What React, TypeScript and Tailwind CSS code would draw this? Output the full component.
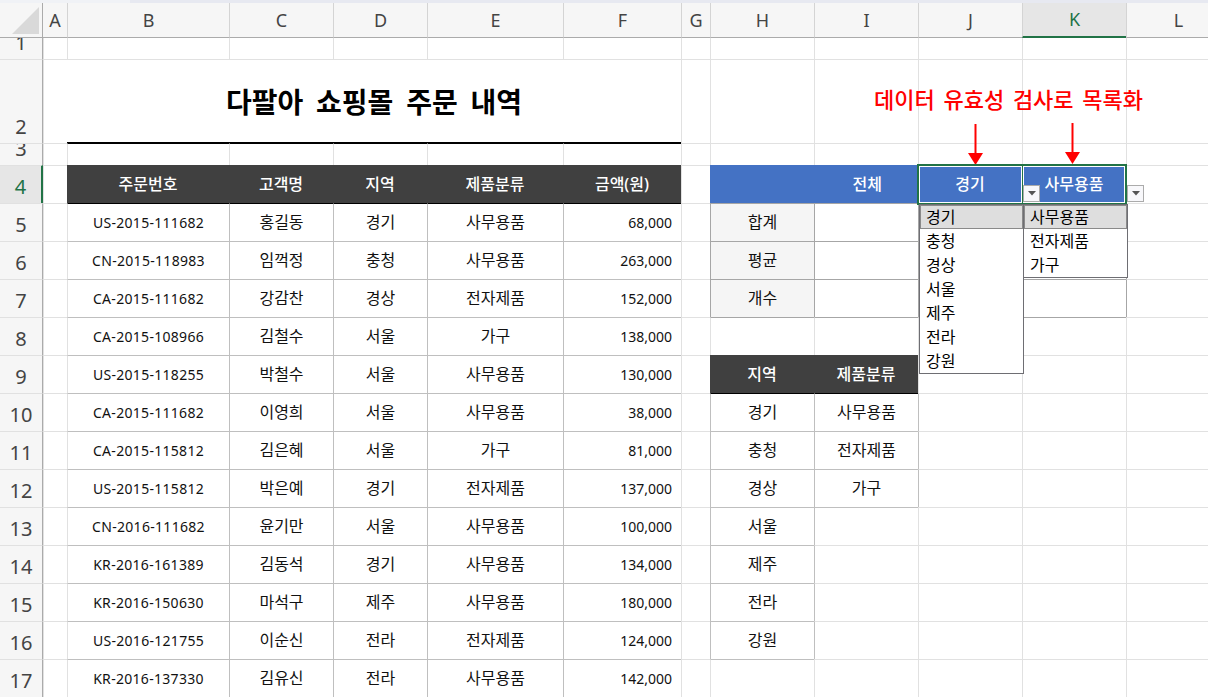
import { Fragment } from "react";
import type { ReactNode } from "react";

const columns = ["A", "B", "C", "D", "E", "F", "G", "H", "I", "J", "K", "L"];

const orders = [
  ["US-2015-111682", "홍길동", "경기", "사무용품", "68,000"],
  ["CN-2015-118983", "임꺽정", "충청", "사무용품", "263,000"],
  ["CA-2015-111682", "강감찬", "경상", "전자제품", "152,000"],
  ["CA-2015-108966", "김철수", "서울", "가구", "138,000"],
  ["US-2015-118255", "박철수", "서울", "사무용품", "130,000"],
  ["CA-2015-111682", "이영희", "서울", "사무용품", "38,000"],
  ["CA-2015-115812", "김은혜", "서울", "가구", "81,000"],
  ["US-2015-115812", "박은예", "경기", "전자제품", "137,000"],
  ["CN-2016-111682", "윤기만", "서울", "사무용품", "100,000"],
  ["KR-2016-161389", "김동석", "경기", "사무용품", "134,000"],
  ["KR-2016-150630", "마석구", "제주", "사무용품", "180,000"],
  ["US-2016-121755", "이순신", "전라", "전자제품", "124,000"],
  ["KR-2016-137330", "김유신", "전라", "사무용품", "142,000"],
];

const regions = ["경기", "충청", "경상", "서울", "제주", "전라", "강원"];
const categories = ["사무용품", "전자제품", "가구"];

// every cell draws its left and top line, as the sheet's lines sit on the first pixel of a cell
const plain = "border-l border-t border-[#e1e1e1]";
const topRow = "border-l border-[#e1e1e1]";
const data = "border-l border-t border-[#bfbfbf] pb-px";
const dataBelowHead = "border-l border-t border-l-[#bfbfbf] border-t-black pb-px";
const dataEdge = "border-l border-t border-l-[#e1e1e1] border-t-[#bfbfbf] pb-px";
const dataEdgeBelowHead = "border-l border-t border-l-[#e1e1e1] border-t-black pb-px";
const stat = "border-l border-t border-[#a6a6a6] pb-px";
const underStat = "border-l border-t border-l-[#e1e1e1] border-t-[#a6a6a6]";
const rightOfStat = "border-l border-t border-l-[#a6a6a6] border-t-[#e1e1e1]";
const rightOfData = "border-l border-t border-l-[#bfbfbf] border-t-[#e1e1e1]";
const dark = "bg-[#404040] font-medium text-white";
const blue = "bg-[#4472c4] font-medium text-white";

function Cell({ className = plain, children }: { className?: string; children?: ReactNode }) {
  return (
    <div className={`flex min-w-0 items-center justify-center overflow-hidden whitespace-nowrap ${className}`}>
      {children}
    </div>
  );
}

function RowHead({ n, active }: { n: number; active?: boolean }) {
  return (
    <div
      className={`flex items-end justify-center overflow-hidden pb-[5px] text-[20px] leading-[22px] ${
        n === 1 ? "" : "border-t border-t-[#e1e1e1]"
      } ${
        active
          ? "border-r-2 border-r-[#217346] bg-[#e6e6e6] text-[#217346]"
          : "border-r border-r-[#ababab] bg-[#f6f6f6] text-[#444444]"
      }`}
    >
      {n}
    </div>
  );
}

function DropList({ items, className }: { items: string[]; className: string }) {
  return (
    <div className={`absolute w-[105px] border border-[#6e6e73] bg-white text-black ${className}`}>
      {items.map((item, i) => (
        <div
          key={item}
          className={`flex h-[24px] items-center ${
            i === 0 ? "border border-[#8a8a8a] bg-[#dedede] pl-[5px]" : "pl-[6px]"
          }`}
        >
          {item}
        </div>
      ))}
    </div>
  );
}

function DropButton({ className }: { className: string }) {
  return (
    <div className={`absolute flex h-[17px] w-[17px] items-center justify-center border border-[#ababab] bg-[#f8f8fb] ${className}`}>
      <svg width="8" height="5" viewBox="0 0 8 5">
        <path d="M0 0h8L4 4.5z" fill="#555555" />
      </svg>
    </div>
  );
}

function DownArrow({ className }: { className: string }) {
  return (
    <svg className={`absolute ${className}`} width="15" height="41" viewBox="0 0 15 41">
      <path d="M6.5 0h2v30h-2z" fill="#ff0000" />
      <path d="M0 29h15L7.5 41z" fill="#ff0000" />
    </svg>
  );
}

function SideCells({ row }: { row: number }) {
  if (row >= 5 && row <= 7) {
    const label = row === 5 ? "합계" : row === 6 ? "평균" : "개수";
    return (
      <>
        <Cell className={`${stat} bg-[#f5f5f5]`}>{label}</Cell>
        <Cell className={stat} />
        <Cell className={stat} />
        <Cell className={stat} />
        <Cell className={rightOfStat} />
      </>
    );
  }
  if (row === 8) {
    return (
      <>
        <Cell className={underStat} />
        <Cell className={underStat} />
        <Cell className={underStat} />
        <Cell className={underStat} />
        <Cell />
      </>
    );
  }
  if (row === 9) {
    return (
      <>
        <Cell className={dark}>지역</Cell>
        <Cell className={dark}>제품분류</Cell>
        <Cell />
        <Cell />
        <Cell />
      </>
    );
  }
  const below = row === 10 ? dataBelowHead : data;
  const region = regions[row - 10];
  const category = categories[row - 10];
  const columnI = category ? below : row === 13 ? data : region ? rightOfData : plain;
  return (
    <>
      <Cell className={region ? below : dataEdge}>{region}</Cell>
      <Cell className={columnI}>{category}</Cell>
      <Cell className={category ? rightOfData : plain} />
      <Cell />
      <Cell />
    </>
  );
}

export default function App() {
  return (
    <div className="relative h-[697px] w-[1208px] overflow-hidden bg-white font-['Noto_Sans','Noto_Sans_CJK_KR',sans-serif] text-[16px] text-[#111111]">
      <div className="flex h-[3px]">
        <div className="w-[130px] bg-[#f0f2f6]" />
        <div className="flex-1 bg-[#e7e9f1]" />
      </div>

      <div className="grid grid-cols-[43px_24px_162px_104px_94px_136px_118px_29px_104px_104px_104px_104px_104px] grid-rows-[35px_21px_84px_22px_38px_repeat(13,38px)]">
        {/* column headers */}
        <div className="flex items-end justify-end border-r border-b border-[#ababab] bg-[#f6f6f6] pr-[3px] pb-[3px]">
          <svg width="27" height="27" viewBox="0 0 27 27">
            <path d="M27 0v27H0z" fill="#d9d9d9" />
          </svg>
        </div>
        {columns.map((col) => (
          <div
            key={col}
            className={`flex items-center justify-center text-[18px] ${col === "A" ? "" : "border-l border-l-[#d4d4d4]"} ${
              col === "K"
                ? "border-b-2 border-b-[#217346] bg-[#e6e6e6] text-[#217346]"
                : "border-b border-b-[#ababab] bg-[#f6f6f6] text-[#444444]"
            }`}
          >
            {col}
          </div>
        ))}

        {/* row 1 */}
        <RowHead n={1} />
        {columns.map((col) => (
          <Cell key={col} className={topRow} />
        ))}

        {/* row 2, the title is merged over B:F */}
        <RowHead n={2} />
        <Cell />
        <div className="col-span-5 flex items-center justify-center border-t border-b border-t-[#e1e1e1] border-b-black pt-[1px] text-[28px] font-bold text-black [word-spacing:5.5px]">
          다팔아 쇼핑몰 주문 내역
        </div>
        {columns.slice(6).map((col) => (
          <Cell key={col} />
        ))}

        {/* row 3, the title's rule runs on into its top line */}
        <RowHead n={3} />
        {columns.map((col) => (
          <Cell key={col} className={col >= "B" && col <= "F" ? dataEdgeBelowHead : plain} />
        ))}

        {/* row 4 */}
        <RowHead n={4} active />
        <Cell />
        {["주문번호", "고객명", "지역", "제품분류", "금액(원)"].map((head) => (
          <Cell key={head} className={dark}>
            {head}
          </Cell>
        ))}
        <Cell />
        <div className={`col-span-2 flex items-center justify-end pr-[36px] ${blue}`}>전체</div>
        <Cell className={blue}>경기</Cell>
        <Cell className={blue}>사무용품</Cell>
        <Cell />

        {/* rows 5 to 17 */}
        {orders.map((order, i) => {
          const row = i + 5;
          const cell = row === 5 ? dataBelowHead : data;
          return (
            <Fragment key={row}>
              <RowHead n={row} />
              <Cell />
              <Cell className={`${row === 5 ? dataEdgeBelowHead : dataEdge} text-[14px] tracking-[0.3px]`}>{order[0]}</Cell>
              <Cell className={cell}>{order[1]}</Cell>
              <Cell className={cell}>{order[2]}</Cell>
              <Cell className={cell}>{order[3]}</Cell>
              <Cell className={`${cell} justify-end pr-[9px] text-[14px]`}>{order[4]}</Cell>
              <Cell />
              <SideCells row={row} />
            </Fragment>
          );
        })}
      </div>

      {/* annotation */}
      <div className="absolute top-[82px] left-[874px] text-[22px] leading-[34px] font-medium whitespace-nowrap text-[#ff0000] [word-spacing:3px]">
        데이터 유효성 검사로 목록화
      </div>
      <DownArrow className="top-[124px] left-[968px]" />
      <DownArrow className="top-[123px] left-[1065px]" />

      {/* selection of J4:K4 */}
      <div className="absolute top-[164px] left-[917px] flex h-[41px] w-[210px] border-2 border-[#217346]">
        <div className="flex-1 border border-white" />
        <div className="w-px bg-[#217346]" />
        <div className="flex-1 border border-white" />
      </div>
      <DropButton className="top-[185px] left-[1023px]" />
      <DropButton className="top-[185px] left-[1127px]" />

      {/* open lists */}
      <DropList items={regions} className="top-[204px] left-[919px]" />
      <DropList items={categories} className="top-[204px] left-[1023px]" />
    </div>
  );
}
